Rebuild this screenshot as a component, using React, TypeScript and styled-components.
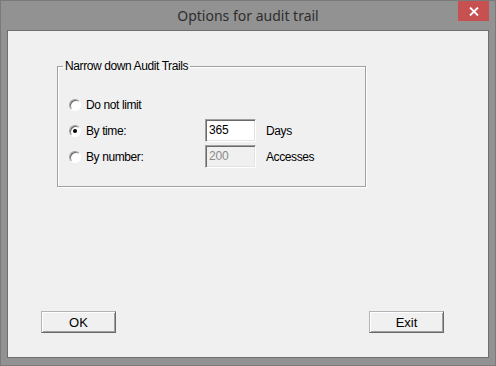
import styled, { createGlobalStyle } from 'styled-components';

const GlobalStyle = createGlobalStyle`
  html, body {
    margin: 0;
    padding: 0;
    background: #929292;
  }
  * {
    box-sizing: border-box;
  }
`;

interface Choice {
  id: string;
  label: string;
  checked: boolean;
  value?: string;
  unit?: string;
  disabled?: boolean;
}

const choices: Choice[] = [
  { id: 'none', label: 'Do not limit', checked: false },
  { id: 'time', label: 'By time:', checked: true, value: '365', unit: 'Days' },
  { id: 'number', label: 'By number:', checked: false, value: '200', unit: 'Accesses', disabled: true },
];

const App = () => {
  return (
    <>
      <GlobalStyle />
      <Window>
        <TitleBar>
          <span />
          <Title>Options for audit trail</Title>
          <CloseButton>
            <svg width="10" height="9" viewBox="0 0 10 9">
              <path d="M1 0.5 L9 8.5 M9 0.5 L1 8.5" stroke="#fff" strokeWidth="1.8" />
            </svg>
          </CloseButton>
        </TitleBar>

        <Client>
          <GroupBox>
            <Legend>Narrow down Audit Trails</Legend>
            <Rows>
              {choices.map((choice) => (
                <Row key={choice.id}>
                  <RadioLabel>
                    <Radio checked={choice.checked} />
                    <Caption>{choice.label}</Caption>
                  </RadioLabel>
                  {choice.value ? (
                    <>
                      <TextBox $disabled={choice.disabled}>{choice.value}</TextBox>
                      <Caption>{choice.unit}</Caption>
                    </>
                  ) : null}
                </Row>
              ))}
            </Rows>
          </GroupBox>

          <ButtonRow>
            <PushButton>OK</PushButton>
            <PushButton>Exit</PushButton>
          </ButtonRow>
        </Client>
      </Window>
    </>
  );
};

export default App;

const Window = styled.div`
  width: 496px;
  height: 366px;
  display: flex;
  flex-direction: column;
  background: #929292;
  border: 1px solid #7a7a7a;
  padding: 0 6px 7px 6px;
`;

const TitleBar = styled.div`
  height: 29px;
  display: grid;
  grid-template-columns: 1fr auto 1fr;
  align-items: start;
`;

const Title = styled.div`
  margin-top: 5px;
  font-family: 'Noto Sans', 'Open Sans', sans-serif;
  font-size: 14px;
  line-height: 20px;
  color: #2e2e2e;
`;

const CloseButton = styled.div`
  justify-self: end;
  width: 31px;
  height: 20px;
  background: #c75050;
  display: flex;
  align-items: center;
  justify-content: center;
`;

const Client = styled.div`
  flex: 1;
  display: flex;
  flex-direction: column;
  background: #f0f0f0;
  border: 1px solid #6e6e6e;
  padding: 35px 44px 24px 49px;
  font-family: 'Liberation Sans', Arial, sans-serif;
  font-size: 12px;
  color: #000;
`;

const GroupBox = styled.fieldset`
  margin: 0;
  width: 309px;
  height: 127px;
  padding: 20px 0 0 0;
  border: 1px solid #a0a0a0;
  box-shadow: 1px 1px 0 #fff, inset 1px 1px 0 #fff;
  position: relative;
  top: -6px;
`;

const Legend = styled.legend`
  margin-left: 5px;
  padding: 0 2px;
  letter-spacing: -0.4px;
  line-height: 13px;
`;

const Rows = styled.div`
  display: flex;
  flex-direction: column;
  gap: 3px;
  padding-left: 11px;
`;

const Row = styled.div`
  display: grid;
  grid-template-columns: 126px 51px auto;
  align-items: center;
  height: 23px;
  column-gap: 10px;
`;

const RadioLabel = styled.div`
  display: flex;
  align-items: center;
  gap: 5px;
`;

const Radio = styled.span<{ checked: boolean }>`
  width: 12px;
  height: 12px;
  border-radius: 50%;
  background: #fff;
  border: 1px solid;
  border-color: #a0a0a0 #fff #fff #a0a0a0;
  box-shadow: inset 1px 1px 0 #696969;
  display: flex;
  align-items: center;
  justify-content: center;

  &::after {
    content: '';
    width: 4px;
    height: 4px;
    border-radius: 50%;
    background: #000;
    display: ${(p) => (p.checked ? 'block' : 'none')};
  }
`;

const Caption = styled.span`
  letter-spacing: -0.4px;
  line-height: 14px;
`;

const TextBox = styled.div<{ $disabled?: boolean }>`
  height: 23px;
  padding: 3px 0 0 3px;
  background: ${(p) => (p.$disabled ? '#f0f0f0' : '#fff')};
  color: ${(p) => (p.$disabled ? '#8a8a8a' : '#000')};
  border: 1px solid;
  border-color: #a0a0a0 #fff #fff #a0a0a0;
  box-shadow: inset 1px 1px 0 #696969, inset -1px -1px 0 #e3e3e3;
  letter-spacing: -0.2px;
`;

const ButtonRow = styled.div`
  margin-top: auto;
  margin-left: -16px;
  display: flex;
  justify-content: space-between;
`;

const PushButton = styled.div`
  width: 75px;
  height: 22px;
  display: flex;
  align-items: center;
  justify-content: center;
  font-size: 13px;
  background: #f0f0f0;
  border: 1px solid;
  border-color: #b4b4b4 #696969 #696969 #b4b4b4;
  box-shadow: inset 1px 1px 0 #fff, inset -1px -1px 0 #a0a0a0;
`;
